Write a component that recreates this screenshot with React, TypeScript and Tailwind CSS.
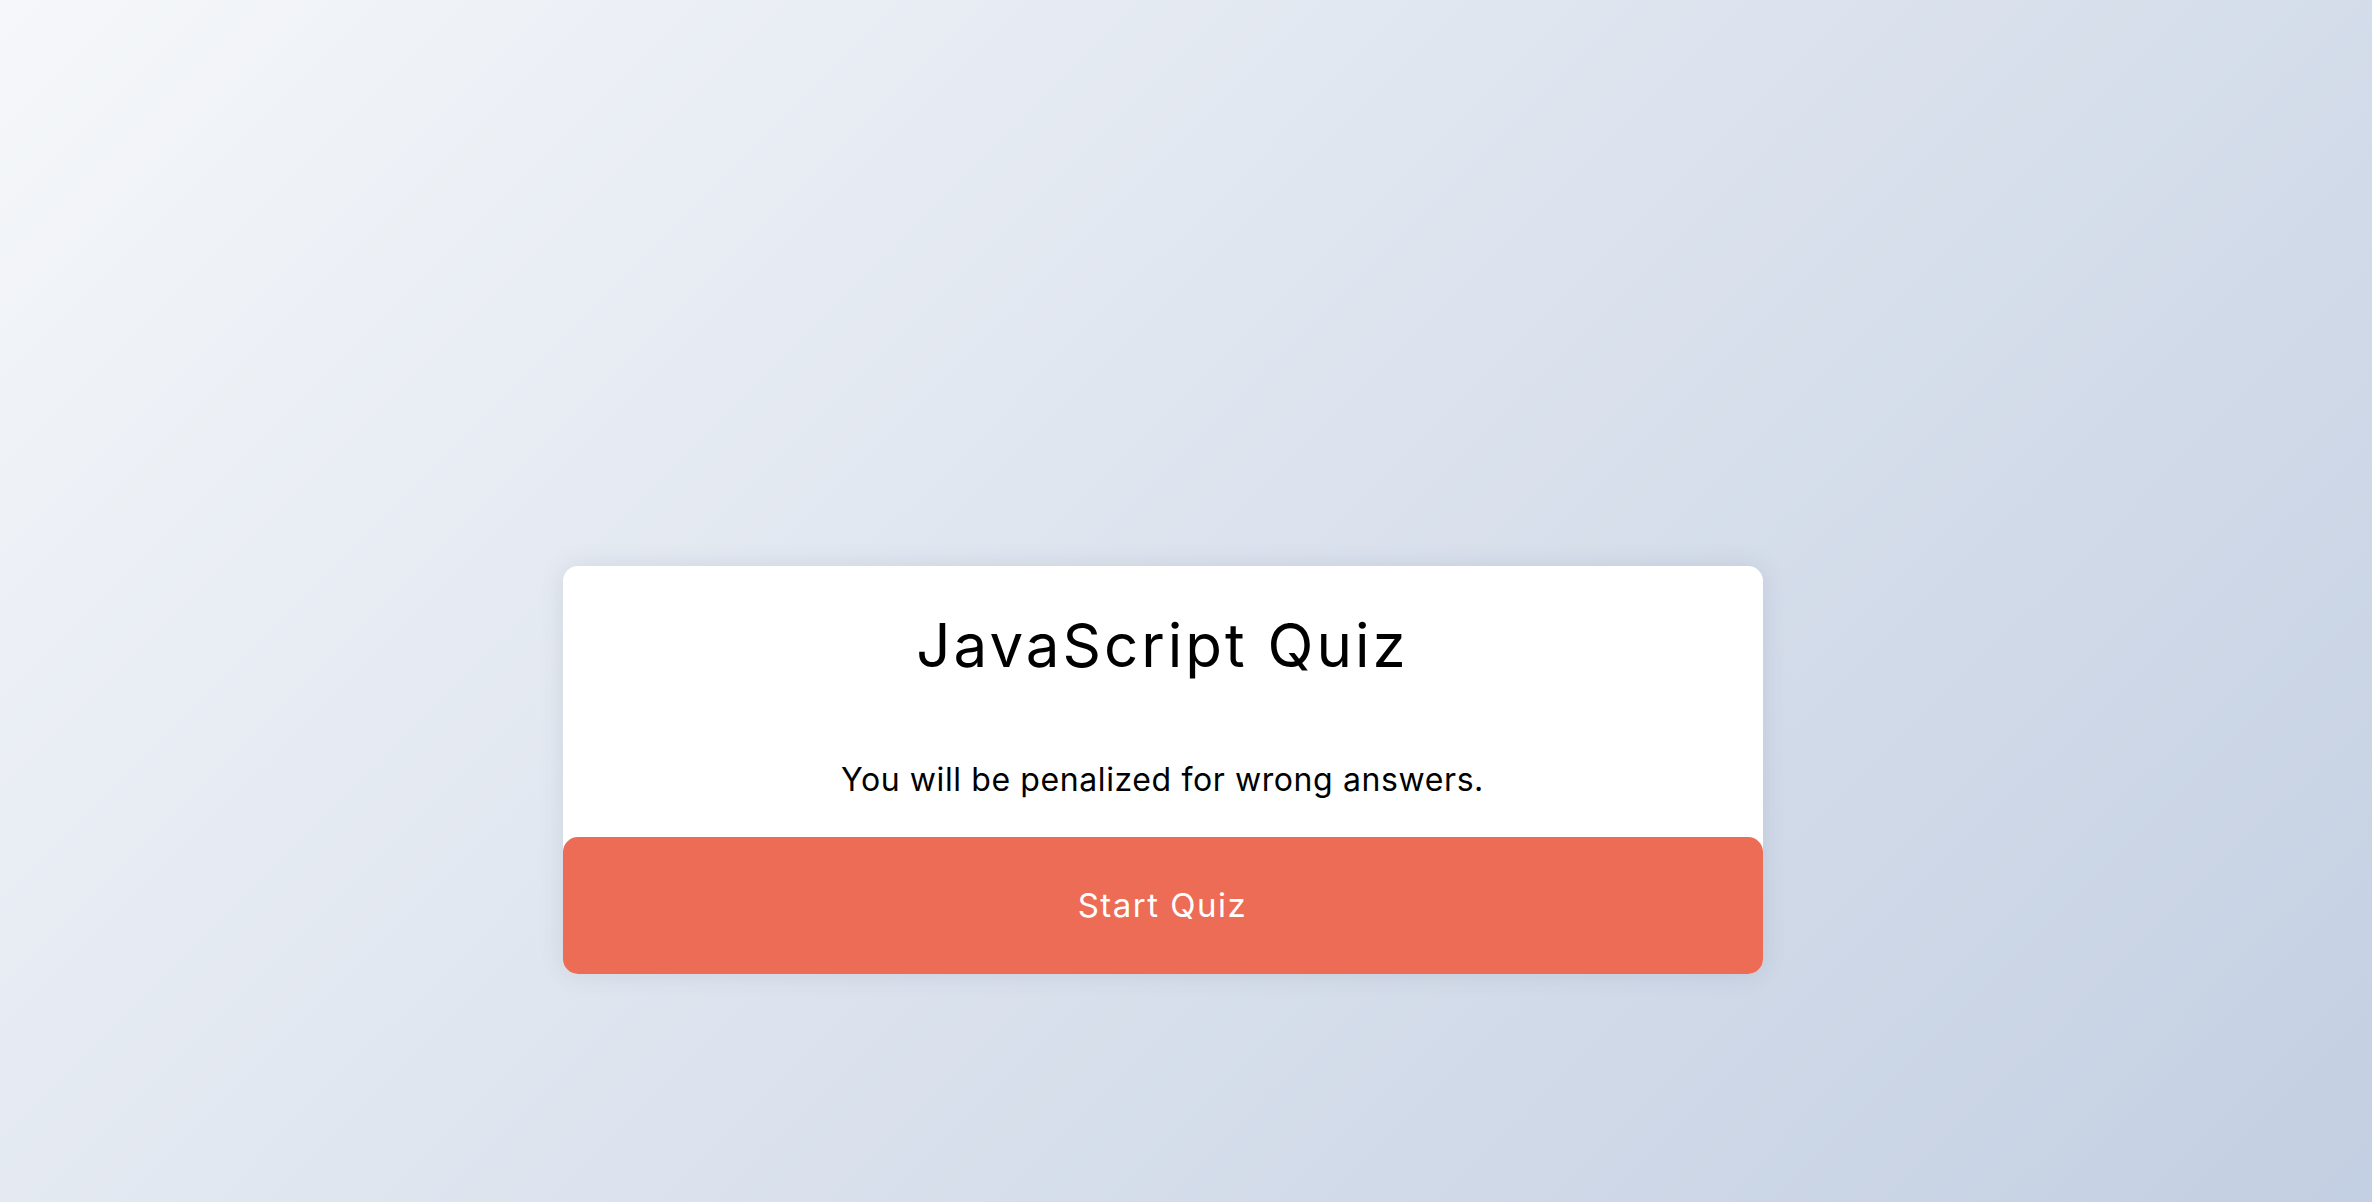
export default function App() {
  return (
    <main className="flex min-h-screen justify-center bg-[linear-gradient(135deg,#f5f7fa_0%,#c3cfe2_100%)] pt-[566px] pr-[47px] font-['Inter',sans-serif]">
      <div className="flex h-[408px] w-[1200px] flex-col rounded-[15px] bg-white shadow-[0_0_24px_rgba(60,70,100,0.12)]">
        <h1 className="pt-[49px] text-center text-[60px] font-normal leading-none tracking-[3px] text-black">
          JavaScript Quiz
        </h1>

        <p className="mt-[89px] text-center text-[32px] leading-none tracking-[0.6px] text-black">
          You will be penalized for wrong answers.
        </p>

        <button className="mt-auto flex h-[137px] w-full items-center justify-center rounded-[15px] bg-[#ed6c55] text-[33px] leading-none tracking-[1.5px] text-white">
          Start Quiz
        </button>
      </div>
    </main>
  );
}
